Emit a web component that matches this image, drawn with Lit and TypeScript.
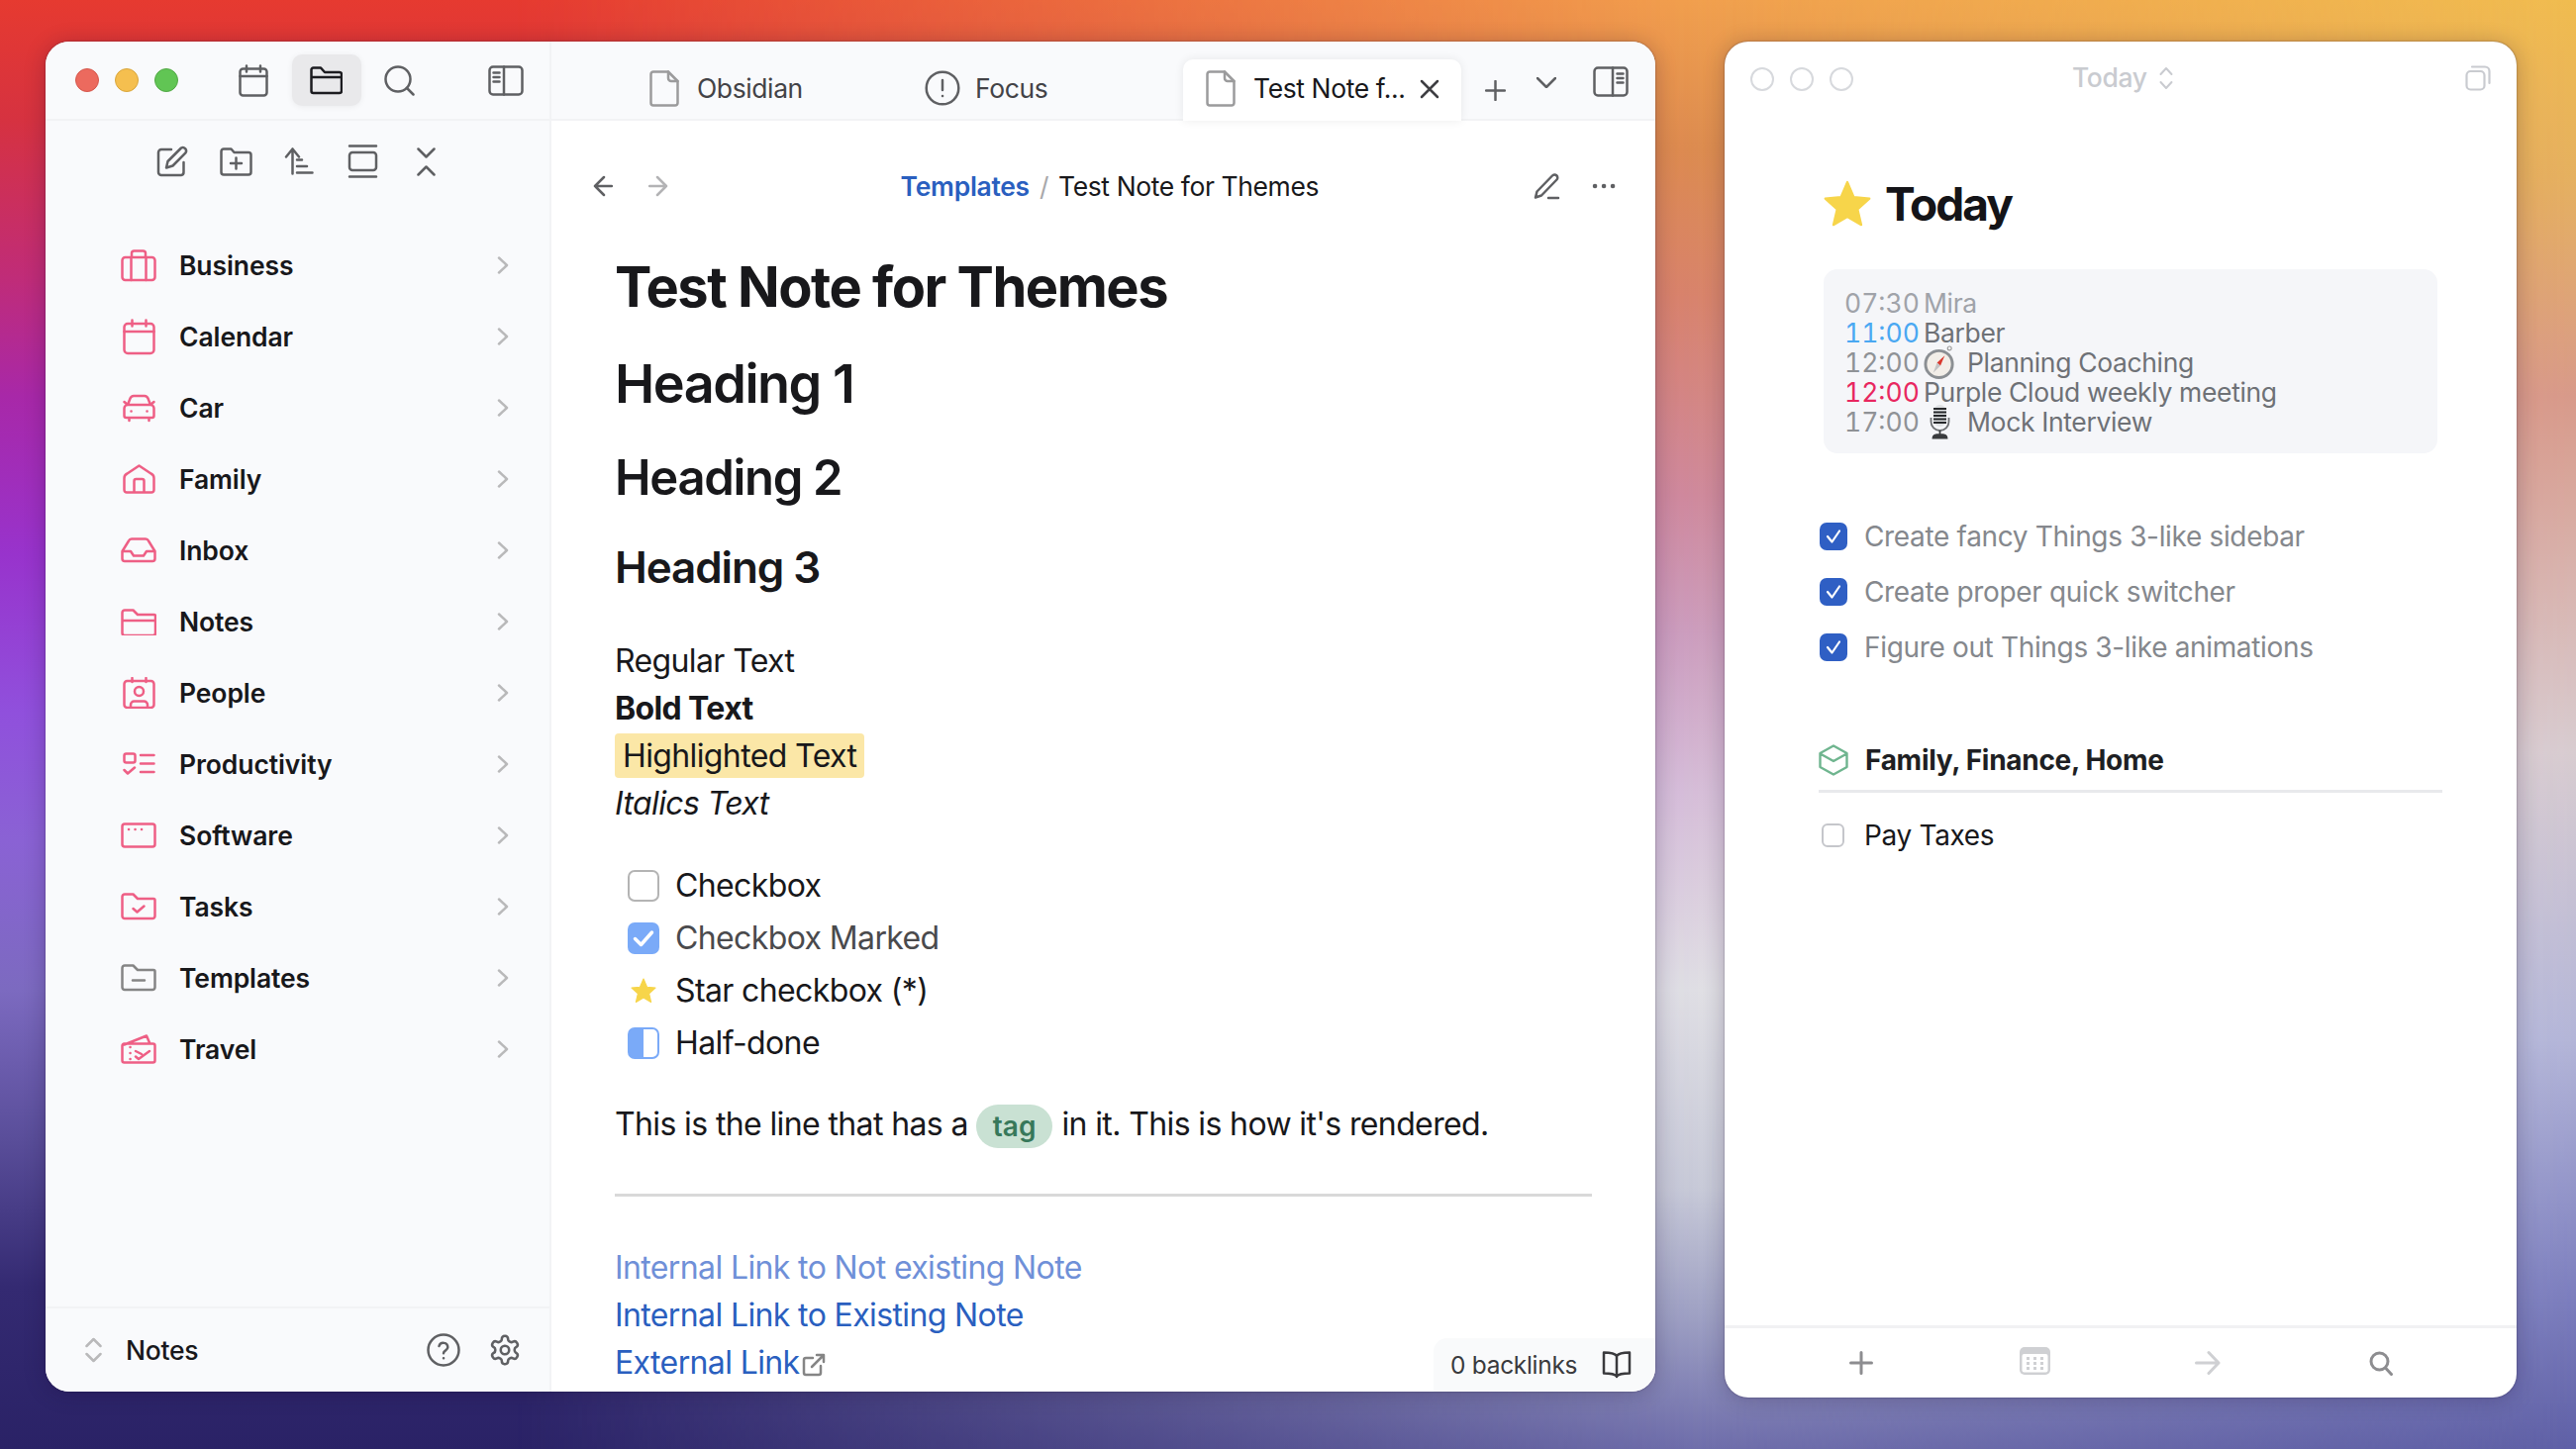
import { LitElement, html, css, svg } from "lit";
import { customElement } from "lit/decorators.js";

const ic = (w: number, h: number, content: unknown, cls = "") =>
  html`<svg class="i ${cls}" width=${w} height=${h} viewBox="0 0 ${w} ${h}">${content}</svg>`;

const chevronR = ic(12, 18, svg`<path d="M2 1.5 L10 9 L2 16.5"/>`, "chev");

const rows: [string, unknown, number, number, string?][] = [
  ["Business", svg`<rect x="1.5" y="8" width="33" height="23" rx="3"/><path d="M11 8V4a2.5 2.5 0 0 1 2.500-2.500h9A2.500 2.500 0 0 1 25 4v4M10.500 8v23M25.500 8v23"/>`, 36, 33],
  ["Calendar", svg`<rect x="1.5" y="5" width="30" height="30" rx="3.500"/><path d="M1.500 13h30M9.500 1.500v6M23.500 1.500v6"/>`, 33, 37],
  ["Car", svg`<path d="M5 11l2.500-6.500A4 4 0 0 1 11 2h11a4 4 0 0 1 3.500 2.500L28 11M5 11h23a3.500 3.500 0 0 1 3.500 3.500V22a2 2 0 0 1-2 2h-26a2 2 0 0 1-2-2v-7.500A3.500 3.500 0 0 1 5 11ZM6.500 24v3M26.500 24v3M1.500 8l3.500 3M31.500 8L28 11M8.500 17.500h.1M24.500 17.500h.1"/>`, 33, 29],
  ["Family", svg`<path d="M16.500 1.500L28.500 9.500a5 5 0 0 1 3 4.500V26a2.500 2.500 0 0 1-2.500 2.500H4A2.500 2.500 0 0 1 1.500 26V14a5 5 0 0 1 3-4.500ZM11.500 28.500V17a2 2 0 0 1 2-2h6a2 2 0 0 1 2 2v11.500"/>`, 33, 30],
  ["Inbox", svg`<path d="M1.500 14L8 3.500A3.500 3.500 0 0 1 11 1.500h14a3.500 3.500 0 0 1 3 2L34.500 14M1.500 14v7.500a2.500 2.500 0 0 0 2.500 2.500h28a2.500 2.500 0 0 0 2.500-2.500V14H26l-3 4.500H13L10 14Z"/>`, 36, 25.500],
  ["Notes", svg`<path d="M1.500 10V4A2.500 2.500 0 0 1 4 1.500h8.500l4.500 4.500h16.500a1.500 1.500 0 0 1 1.500 1.500v17a2.500 2.500 0 0 1-2.500 2.500H4a2.500 2.500 0 0 1-2.500-2.500ZM1.500 12h33"/>`, 36, 27],
  ["People", svg`<rect x="1.500" y="4" width="30" height="27" rx="3"/><path d="M9.500 1v4M23.500 1v4M8 30.500v-2.500a3.500 3.500 0 0 1 3.500-3.500h10a3.500 3.500 0 0 1 3.500 3.500v2.500"/><circle cx="16.500" cy="14.500" r="4.500"/>`, 33, 32],
  ["Productivity", svg`<rect x="1.500" y="1.500" width="11" height="9" rx="2"/><path d="M1.500 18l3.500 3.500 7-6M18 3h13.500M18 11.500h13.500M18 20h13.500"/>`, 33, 24],
  ["Software", svg`<rect x="1.500" y="1.500" width="33" height="23" rx="2.500"/><path d="M8 7h.1M14.500 7h.1M21 7h.1"/>`, 36, 26],
  ["Tasks", svg`<path d="M1.500 23.500V4A2.500 2.500 0 0 1 4 1.500h8.500L17 6h16a1.500 1.500 0 0 1 1.500 1.500v16a2.500 2.500 0 0 1-2.500 2.500H4a2.500 2.500 0 0 1-2.500-2.500ZM12.500 16l4 3.500 7-6"/>`, 36, 27.500],
  ["Templates", svg`<path d="M1.500 23.500V4A2.500 2.500 0 0 1 4 1.500h8.500L17 6h16a1.500 1.500 0 0 1 1.500 1.500v16a2.500 2.500 0 0 1-2.500 2.500H4a2.500 2.500 0 0 1-2.500-2.500ZM12 16.500h12"/>`, 36, 27.500, "gray"],
  ["Travel", svg`<path d="M3.500 10.500L26 1.500l3 7M3.500 9.500h29a2 2 0 0 1 2 2v15a2 2 0 0 1-2 2h-29a2 2 0 0 1-2-2v-15a2 2 0 0 1 2-2ZM9.500 13h.1M9.500 19h.1M9.500 25h.1M15 22.500l3 2.500 11-8M15 17l6 3"/>`, 36, 30],
];

const star = (s: number) => html`<svg class="star" width=${s} height=${s} viewBox="0 0 24 24"><path d="M12 1.800l3 7 7.300.7-5.500 5 1.700 7.300L12 18l-6.500 3.800 1.700-7.300-5.500-5 7.300-.7Z"/></svg>`;

const compass = html`<svg class="emoji" width="34" height="36" viewBox="0 0 34 36"><circle cx="27" cy="3.500" r="2" fill="none" stroke="#9a9a9a" stroke-width="1.200"/><circle cx="16" cy="20" r="15.500" fill="#8b8f93"/><circle cx="16" cy="20" r="12.500" fill="#f2eee8"/><path d="M22 11l-4.500 10.500-3.500-3Z" fill="#d9392e"/><path d="M10 29l4-10.500 3.500 3Z" fill="#c3c3c3"/></svg>`;

const mic = html`<svg class="emoji" width="30" height="36" viewBox="0 0 30 36"><rect x="8.500" y="1" width="13" height="22" rx="6.500" fill="#dfe2e4"/><path d="M8.500 5h13M8.500 8.500h13M8.500 12h13M8.500 15.500h13M8.500 19h13" stroke="#26282b" stroke-width="2.200"/><path d="M6 14v4a9 9 0 0 0 18 0v-4" fill="none" stroke="#6d7073" stroke-width="1.800"/><path d="M15 27v4M8 34.500c0-3 3-3.500 7-3.500s7 .5 7 3.500Z" fill="#3a3c3f" stroke="#3a3c3f" stroke-width="1.800"/></svg>`;

const pageIcon = ic(30, 37, svg`<path d="M4 1.500h15L28.500 11v22a2.500 2.500 0 0 1-2.500 2.500H4A2.500 2.500 0 0 1 1.500 33V4A2.500 2.500 0 0 1 4 1.500Z"/><path class="soft" d="M19 1.500V8a3 3 0 0 0 3 3h6.500"/>`, "page");

@customElement("app-root")
export class AppRoot extends LitElement {
  static styles = css`
    :host {
      display: flex;
      align-items: flex-start;
      position: relative;
      width: 2602px;
      height: 1464px;
      box-sizing: border-box;
      padding: 42px 0 0 46px;
      gap: 69.5px;
      overflow: hidden;
      font-family: Inter, "Liberation Sans", sans-serif;
      color: #18181b;
      background: linear-gradient(180deg, #e63a30 0, #d63240 120px, #c02c78 280px, #a828a8 400px, #9833cc 560px, #9050dc 720px, #8a62d4 850px, #7c6ac0 1000px, #5a4e9a 1150px, #342a72 1300px, #2a2266 1464px);
    }
    :host::before, :host::after { content: ""; position: absolute; inset: 0; }
    :host::before {
      background: linear-gradient(180deg, #f1a04e 0, #dc8c50 150px, #d8846c 300px, #cf8a9c 500px, #cc9ebd 640px, #d6bed8 800px, #e0dfe4 1000px, #c8cad8 1200px, #9fa1c4 1330px, #6f6eab 1464px);
      -webkit-mask-image: linear-gradient(90deg, transparent 20%, #000 66%);
      mask-image: linear-gradient(90deg, transparent 20%, #000 66%);
    }
    :host::after {
      background: linear-gradient(180deg, #f0bc50 0, #e5b060 180px, #d89a8a 400px, #d8ccd0 760px, #b3b5d8 1050px, #7e80bf 1300px, #5f60a6 1464px);
      -webkit-mask-image: linear-gradient(90deg, transparent 66%, #000 100%);
      mask-image: linear-gradient(90deg, transparent 66%, #000 100%);
    }
    .win {
      position: relative;
      z-index: 1;
      flex: none;
      box-sizing: border-box;
      border-radius: 24px;
      overflow: hidden;
      background: #fff;
      box-shadow: 0 2px 22px rgba(20, 10, 40, .24), 0 0 2px rgba(20, 10, 40, .45);
    }
    .main { width: 1626px; height: 1364px; display: grid; grid-template-columns: 511px 1fr; }
    .today { width: 800.5px; height: 1370px; display: flex; flex-direction: column; }

    .i { fill: none; stroke: currentColor; stroke-width: 2.500; stroke-linecap: round; stroke-linejoin: round; flex: none; display: block; }
    .chev { color: #b9b9ba; }
    .page { color: #9b9b9c; }
    .page .soft { stroke-width: 2.500; }
    .star { fill: #f7d54a; stroke: #f7d54a; stroke-width: 1; stroke-linejoin: round; flex: none; display: block; }
    .emoji { flex: none; display: block; }

    /* sidebar */
    .side { display: flex; flex-direction: column; background: #f9fafc; border-right: 2px solid #f2f3f5; min-height: 0; }
    .bar { height: 80px; flex: none; box-sizing: border-box; border-bottom: 2px solid #f2f3f5; display: flex; align-items: center; }
    .side .bar { padding: 0 26px 0 30px; }
    .lights { display: flex; gap: 16px; }
    .light { width: 24px; height: 24px; border-radius: 50%; box-sizing: border-box; }
    .red { background: #ec6a5e; border: 1px solid #d5574c; }
    .yellow { background: #f5bf4f; border: 1px solid #d9a63c; }
    .green { background: #61c554; border: 1px solid #52a846; }
    .tools { display: flex; gap: 3.500px; margin-left: 41px; color: #5f6063; }
    .tool { width: 70px; height: 52px; display: flex; align-items: center; justify-content: center; border-radius: 10px; }
    .tool.on { background: #e9e9eb; color: #1c1c20; box-shadow: 0 1px 6px rgba(0,0,0,.06); }
    .toggle { margin-left: auto; color: #5f6063; }
    .sub { height: 82px; flex: none; display: flex; align-items: center; padding-left: 112px; gap: 32px; color: #5f6063; }
    .sub > div { width: 32px; display: flex; justify-content: center; }
    .tree { flex: 1; padding-top: 28px; }
    .row { height: 72px; display: flex; align-items: center; padding: 0 41px 0 76px; font-size: 26.500px; font-weight: 600; letter-spacing: -0.1px; color: #18181b; }
    .row .icbox { width: 36px; display: flex; justify-content: center; color: #ee5f85; margin-right: 23px; }
    .row .icbox.gray { color: #858585; }
    .row .label { flex: 1; }
    .foot { height: 86px; box-sizing: border-box; border-top: 2px solid #f2f3f5; display: flex; align-items: center; padding: 0 28px 0 40px; font-size: 26.500px; font-weight: 500; letter-spacing: -.3px; color: #18181b; }
    .foot .updown { color: #b9b9ba; margin-right: 24px; }
    .foot .fill { flex: 1; }
    .foot .ficon { color: #5f6063; margin-left: 28px; }
    .gear { width: 34px; height: 34px; fill: none; stroke: currentColor; stroke-width: 1.800; stroke-linecap: round; stroke-linejoin: round; display: block; }

    /* note pane */
    .pane { position: relative; display: flex; flex-direction: column; min-width: 0; overflow: hidden; }
    .tabs { background: #f9fafc; padding-left: 76px; align-items: flex-start; color: #434347; font-size: 26.500px; letter-spacing: -.4px; }
    .tab { width: 281px; height: 62px; margin-top: 18px; box-sizing: border-box; padding: 0 0 4px 23px; display: flex; align-items: center; flex: none; position: relative; z-index: 1; }
    .tab .name { margin-left: 18px; white-space: nowrap; }
    .tab.sq .i { margin-left: -3px; color: #5f6063; }
    .tab.sq .name { margin-left: 15px; }
    .tab.on { background: #fff; color: #18181b; border-radius: 10px 10px 0 0; box-shadow: 0 0 10px rgba(0,0,0,.08); }
    .tab.on .x { position: absolute; left: 239px; top: 20px; color: #3e3e42; }
    .act { color: #5f6063; }
    .plus { margin: 38.500px 0 0 23.500px; }
    .down { margin: 35.500px 0 0 31.500px; }
    .rtoggle { margin: 25px 0 0 36.500px; }

    .vh { height: 132px; flex: none; display: flex; align-items: center; padding: 0 40px 0 42px; font-size: 26.500px; letter-spacing: -.4px; }
    .back { color: #5f6063; }
    .fwd { color: #b3b3b5; margin-left: 36px; }
    .crumb { margin-left: 234.600px; display: flex; align-items: center; color: #18181b; white-space: nowrap; }
    .crumb b { color: #2a5fbf; font-weight: 600; letter-spacing: -.3px; }
    .crumb span { color: #a8a8aa; margin: 0 10px; }
    .pencil { margin-left: auto; color: #5f6063; }
    .dots { margin-left: 32px; color: #5f6063; }

    .doc { padding: 0 64px; font-size: 32px; line-height: 48px; letter-spacing: -.62px; color: #18181b; }
    .doc h1, .doc h2, .doc h3 { margin: 0; white-space: nowrap; }
    .title { font-size: 56px; line-height: 72px; font-weight: 700; letter-spacing: -1.500px; }
    .h1 { font-size: 54px; line-height: 60px; margin-top: 32px !important; font-weight: 600; letter-spacing: -1.500px; }
    .h2 { font-size: 49px; line-height: 58px; margin-top: 36px !important; font-weight: 600; letter-spacing: -1.300px; }
    .h3 { font-size: 44px; line-height: 50px; margin-top: 36px !important; font-weight: 600; letter-spacing: -1.100px; }
    .para { margin-top: 46px; }
    .para b { font-weight: 700; }
    .hl { display: inline-block; background: #fbe7a7; border-radius: 4px; padding: 0 8px; line-height: 45px; vertical-align: top; margin-top: 1px; }
    .checks { margin: 32px 0 0 13px; display: flex; flex-direction: column; }
    .ck { height: 53px; display: flex; align-items: center; gap: 16px; }
    .ck.done { color: #4a4a4d; }
    .box { width: 32px; height: 32px; box-sizing: border-box; border-radius: 7px; flex: none; display: flex; align-items: center; justify-content: center; }
    .empty { border: 2.500px solid #b4b4b4; }
    .marked { background: #7aaaf8; color: #fff; }
    .marked .i { stroke-width: 3.500; }
    .half { border: 2.500px solid #7aaaf8; background: linear-gradient(90deg, #7aaaf8 50%, #fff 50%); }
    .line { margin-top: 32px; white-space: nowrap; }
    .tag { display: inline-block; background: #c9e1d3; color: #37785a; font-weight: 600; font-size: 28px; letter-spacing: 0; line-height: 44px; border-radius: 22px; padding: 0 17px; margin: 0 9px 0 8px; vertical-align: -1px; }
    hr { border: 0; height: 3px; background: #d9d9d9; margin: 46px 0 48px; }
    .links a { display: flex; align-items: center; color: #2a5fbf; text-decoration: none; }
    .links a.miss { color: #6f90d8; }
    .links .ext { color: #858585; margin: 4px 0 0 2px; }
    .bl { position: absolute; right: 0; bottom: 0; width: 224px; height: 54px; box-sizing: border-box; background: #f9fafb; border-radius: 14px 0 0 0; display: flex; align-items: center; padding: 0 24px 0 17px; font-size: 24.500px; letter-spacing: -.3px; color: #3a3a3d; justify-content: space-between; white-space: nowrap; }
    .bl .i { color: #3a3a3d; }

    /* today window */
    .tb { height: 76px; flex: none; display: flex; align-items: center; padding: 0 26px 0 26.500px; color: #c9cbd0; }
    .hollow { width: 24px; height: 24px; border-radius: 50%; box-sizing: border-box; border: 2px solid #d7d9dd; }
    .tb .tt { margin: -3px 0 0 221px; font-size: 26.500px; font-weight: 500; letter-spacing: -.4px; display: flex; align-items: center; gap: 12px; line-height: 1; }
    .tb .copy { margin-left: auto; margin-top: -3px; }
    .body { flex: 1; padding-left: 96.500px; width: 640px; box-sizing: content-box; }
    .head { margin-top: 58px; height: 60px; display: flex; align-items: center; gap: 12px; font-size: 46px; font-weight: 700; letter-spacing: -2px; margin-left: 2px; color: #141418; }
    .card { margin: 36px 0 0 4px; width: 620px; height: 186px; box-sizing: border-box; border-radius: 14px; background: #f5f6f9; padding: 19px 21px 0; font-size: 26.500px; line-height: 30px; letter-spacing: -.35px; color: #6e7176; }
    .ev { display: flex; align-items: center; height: 30px; white-space: pre; }
    .ev.past { color: #a0a3a9; }
    .t { color: #8f9296; width: 73px; margin-right: 7px; font-variant-numeric: tabular-nums; letter-spacing: 0; }
    .past .t { color: inherit; }
    .blue { color: #4aa8f2; }
    .pink { color: #e8275f; }
    .ev .emoji { margin: 0 11px 0 0; width: 33px; }
    .tasks { margin-top: 56px; }
    .task { height: 56px; display: flex; align-items: center; font-size: 28px; letter-spacing: -.34px; color: #85888d; gap: 17px; }
    .tick { width: 28px; height: 28px; border-radius: 7px; background: #2f5fc4; color: #fff; display: flex; align-items: center; justify-content: center; flex: none; }
    .tick .i { stroke-width: 2.200; }
    .sect { margin: 62px 0 0 -1px; width: 630px; height: 57px; box-sizing: border-box; padding-bottom: 7px; border-bottom: 3px solid #e8e9ec; display: flex; align-items: center; gap: 17px; font-size: 28px; font-weight: 700; letter-spacing: -.3px; color: #1e1f23; }
    .sect .i { color: #6fb58f; stroke-width: 2.400; }
    .tk2 { margin-top: 15px; color: #18181b; margin-left: 2px; gap: 20px; }
    .tk2 .ob { width: 23px; height: 24px; box-sizing: border-box; border: 2px solid #c5c6cb; border-radius: 6px; flex: none; }
    .ft { height: 73px; flex: none; box-sizing: border-box; border-top: 3px solid #f1f1f3; padding-left: 51px; display: grid; grid-template-columns: repeat(4, 175px); align-items: center; justify-items: center; }
    .ft .g1 { color: #8d8d90; }
    .ft .g2 { color: #cfd0d3; }
  `;

  render() {
    return html`
      <div class="win main">
        <aside class="side">
          <div class="bar">
            <div class="lights"><div class="light red"></div><div class="light yellow"></div><div class="light green"></div></div>
            <div class="tools">
              <div class="tool">${ic(30, 33, svg`<rect x="1.500" y="4.500" width="27" height="27" rx="3"/><path d="M1.500 12h27M8 1.500v6M22 1.500v6"/>`)}</div>
              <div class="tool on">${ic(33, 29, svg`<path d="M1.500 10V3.500a2 2 0 0 1 2-2h7.500l4 4.500h15a2 2 0 0 1 2 2v17a2 2 0 0 1-2 2h-26.500a2 2 0 0 1-2-2ZM1.500 11h30"/>`)}</div>
              <div class="tool">${ic(31, 31, svg`<circle cx="14" cy="14" r="12.500"/><path d="M23 23l6.500 6.500"/>`)}</div>
            </div>
            <div class="toggle">${ic(36, 31, svg`<rect x="1.500" y="1.500" width="33" height="28" rx="3.500"/><path d="M16 1.500v28M5.500 7.500h6M5.500 12h6M5.500 16.500h6"/>`)}</div>
          </div>
          <div class="sub">
            <div>${ic(32, 32, svg`<path d="M15 4H5a3 3 0 0 0-3 3v20a3 3 0 0 0 3 3h20a3 3 0 0 0 2.500-3V17"/><path d="M25 2.500a3.400 3.400 0 0 1 4.500 4.800L16.500 20.500l-6.500 2 1.500-6.500Z"/>`)}</div>
            <div>${ic(33, 29, svg`<path d="M1.500 25V4a2.500 2.500 0 0 1 2.500-2.500h7.500l3 3.500H29a2.500 2.500 0 0 1 2.500 2.500V25a2.500 2.500 0 0 1-2.500 2.500H4A2.500 2.500 0 0 1 1.500 25ZM16.500 10.500v11M11 16h11"/>`)}</div>
            <div>${ic(30, 28, svg`<path d="M2 9.500l6.500-8 6.500 8M8.500 1.500v25M13 12.500h5M13 19h10M13 25.500h15.500"/>`)}</div>
            <div>${ic(31, 34, svg`<rect x="2" y="8" width="27" height="18" rx="3"/><path d="M2 1.500h27M2 32.500h27"/>`)}</div>
            <div>${ic(19, 29, svg`<path d="M1.500 1.500l8 8 8-8M1.500 27.500l8-8 8 8"/>`)}</div>
          </div>
          <div class="tree">
            ${rows.map(([name, icon, w, h, cl]) => html`
              <div class="row">
                <div class="icbox ${cl ?? ""}">${ic(w, h, icon)}</div>
                <div class="label">${name}</div>
                ${chevronR}
              </div>`)}
          </div>
          <div class="foot">
            <div class="updown">${ic(17, 26, svg`<path d="M1.500 9l7-7 7 7M1.500 17l7 7 7-7"/>`)}</div>
            <div class="fill">Notes</div>
            <div class="ficon">${ic(34, 34, svg`<circle cx="17" cy="17" r="15.500"/><path d="M12.500 13a4.500 4.500 0 0 1 8.800 1.300c0 3-4.300 3.500-4.300 6M17 25.200h.1"/>`)}</div>
            <div class="ficon"><svg class="gear" viewBox="0 0 24 24"><path d="M12.220 2h-.44a2 2 0 0 0-2 2v.18a2 2 0 0 1-1 1.730l-.43.250a2 2 0 0 1-2 0l-.15-.08a2 2 0 0 0-2.730.730l-.22.380a2 2 0 0 0 .73 2.730l.15.100a2 2 0 0 1 1 1.720v.510a2 2 0 0 1-1 1.740l-.15.090a2 2 0 0 0-.73 2.730l.22.380a2 2 0 0 0 2.730.730l.15-.08a2 2 0 0 1 2 0l.43.250a2 2 0 0 1 1 1.730V20a2 2 0 0 0 2 2h.44a2 2 0 0 0 2-2v-.18a2 2 0 0 1 1-1.730l.43-.25a2 2 0 0 1 2 0l.15.080a2 2 0 0 0 2.730-.73l.22-.39a2 2 0 0 0-.73-2.730l-.15-.08a2 2 0 0 1-1-1.740v-.5a2 2 0 0 1 1-1.740l.15-.09a2 2 0 0 0 .73-2.730l-.22-.38a2 2 0 0 0-2.730-.73l-.15.08a2 2 0 0 1-2 0l-.43-.25a2 2 0 0 1-1-1.730V4a2 2 0 0 0-2-2z"/><circle cx="12" cy="12" r="3"/></svg></div>
          </div>
        </aside>
        <section class="pane">
          <div class="bar tabs">
            <div class="tab">${pageIcon}<div class="name">Obsidian</div></div>
            <div class="tab sq">${ic(36, 36, svg`<circle cx="18" cy="18" r="16.300"/><path d="M18 10v10M18 26h.1"/>`)}<div class="name">Focus</div></div>
            <div class="tab on">${pageIcon}<div class="name">Test Note f...</div><div class="x">${ic(20, 20, svg`<path d="M2 2l16 16M18 2L2 18"/>`)}</div></div>
            <div class="act plus">${ic(21, 21, svg`<path d="M10.500 1v19M1 10.500h19"/>`)}</div>
            <div class="act down">${ic(20, 11, svg`<path d="M1 1l9 9 9-9"/>`)}</div>
            <div class="act rtoggle">${ic(36, 31, svg`<rect x="1.500" y="1.500" width="33" height="28" rx="3.500"/><path d="M20 1.500v28M24.500 7.500h6M24.500 12h6M24.500 16.500h6"/>`)}</div>
          </div>
          <div class="vh">
            <div class="back">${ic(20, 22, svg`<path d="M19 11H2M11 2l-9 9 9 9"/>`)}</div>
            <div class="fwd">${ic(20, 22, svg`<path d="M1 11h17M9 2l9 9-9 9"/>`)}</div>
            <div class="crumb"><b>Templates</b><span>/</span>Test Note for Themes</div>
            <div class="pencil">${ic(27, 27, svg`<path d="M19 2.500a3 3 0 0 1 4.500 4L8 22.500l-6 2 1.500-6ZM15 25h10"/>`)}</div>
            <div class="dots">${ic(24, 6, svg`<path d="M3 3h.1M12 3h.1M21 3h.1" stroke-width="4.500"/>`)}</div>
          </div>
          <div class="doc">
            <h1 class="title">Test Note for Themes</h1>
            <h1 class="h1">Heading 1</h1>
            <h2 class="h2">Heading 2</h2>
            <h3 class="h3">Heading 3</h3>
            <div class="para">
              <div>Regular Text</div>
              <div><b>Bold Text</b></div>
              <div><span class="hl">Highlighted Text</span></div>
              <div><i>Italics Text</i></div>
            </div>
            <div class="checks">
              <div class="ck"><div class="box empty"></div>Checkbox</div>
              <div class="ck done"><div class="box marked">${ic(22, 18, svg`<path d="M2.500 9.500l6 6L19.500 3"/>`)}</div>Checkbox Marked</div>
              <div class="ck"><div class="box">${star(28)}</div>Star checkbox (*)</div>
              <div class="ck"><div class="box half"></div>Half-done</div>
            </div>
            <div class="line">This is the line that has a<span class="tag">tag</span>in it. This is how it's rendered.</div>
            <hr />
            <div class="links">
              <a class="miss">Internal Link to Not existing Note</a>
              <a>Internal Link to Existing Note</a>
              <a>External Link<span class="ext">${ic(24, 24, svg`<path d="M11 5H4a2 2 0 0 0-2 2v13a2 2 0 0 0 2 2h13a2 2 0 0 0 2-2v-7M10 14L22 2M15 2h7v7"/>`)}</span></a>
            </div>
          </div>
          <div class="bl">0 backlinks ${ic(30, 30, svg`<path d="M15 6c-2-3-6-3.500-13-3.500v21c7 0 11 .5 13 3 2-2.500 6-3 13-3v-21c-7 0-11 .5-13 3.500ZM15 6v21"/>`)}</div>
        </section>
      </div>

      <div class="win today">
        <div class="tb">
          <div class="lights"><div class="hollow"></div><div class="hollow"></div><div class="hollow"></div></div>
          <div class="tt">Today ${ic(14, 24, svg`<path d="M1.500 8L7 2l5.500 6M1.500 16L7 22l5.500-6" stroke-width="2"/>`)}</div>
          <div class="copy">${ic(26, 26, svg`<rect x="1.500" y="6" width="18" height="18.500" rx="4" stroke-width="2.200"/><path d="M7 1.500h13a4.500 4.500 0 0 1 4.500 4.500v12" stroke-width="2.200"/>`)}</div>
        </div>
        <div class="body">
          <div class="head">${star(52)}Today</div>
          <div class="card">
            <div class="ev past"><span class="t">07:30</span>Mira</div>
            <div class="ev"><span class="t blue">11:00</span>Barber</div>
            <div class="ev"><span class="t">12:00</span>${compass}Planning Coaching</div>
            <div class="ev"><span class="t pink">12:00</span>Purple Cloud weekly meeting</div>
            <div class="ev"><span class="t">17:00</span>${mic}Mock Interview</div>
          </div>
          <div class="tasks">
            ${["Create fancy Things 3-like sidebar", "Create proper quick switcher", "Figure out Things 3-like animations"].map((t) => html`
              <div class="task"><div class="tick">${ic(16, 16, svg`<path d="M2 8l4.500 5.500L14 2.500"/>`)}</div>${t}</div>`)}
          </div>
          <div class="sect">${ic(30, 32, svg`<path d="M15 1.500L28.500 9v14L15 30.500 1.500 23V9ZM1.500 9.500L15 17l13.500-7.500"/>`)}Family, Finance, Home</div>
          <div class="task tk2"><div class="ob"></div>Pay Taxes</div>
        </div>
        <div class="ft">
          <div class="g1">${ic(24, 24, svg`<path d="M12 1.500v21M1.500 12h21" stroke-width="3"/>`)}</div>
          <div class="g2">
            <svg width="31" height="28" viewBox="0 0 31 28"><rect x="0" y="0" width="31" height="28" rx="5" fill="currentColor"/><rect x="2.500" y="7" width="26" height="18.500" rx="2" fill="#fff"/><g fill="currentColor"><rect x="7" y="10" width="3" height="3"/><rect x="14" y="10" width="3" height="3"/><rect x="21" y="10" width="3" height="3"/><rect x="7" y="15" width="3" height="3"/><rect x="14" y="15" width="3" height="3"/><rect x="21" y="15" width="3" height="3"/><rect x="7" y="20" width="3" height="3"/><rect x="14" y="20" width="3" height="3"/><rect x="21" y="20" width="3" height="3"/></g></svg>
          </div>
          <div class="g2">${ic(26, 26, svg`<path d="M1.500 13h22M14 2.500L24 13 14 23.500" stroke-width="3"/>`)}</div>
          <div class="g1">${ic(24, 25, svg`<circle cx="10.500" cy="10.500" r="8.500" stroke-width="3"/><path d="M16.500 17l6 6.500" stroke-width="3"/>`)}</div>
        </div>
      </div>
    `;
  }
}
